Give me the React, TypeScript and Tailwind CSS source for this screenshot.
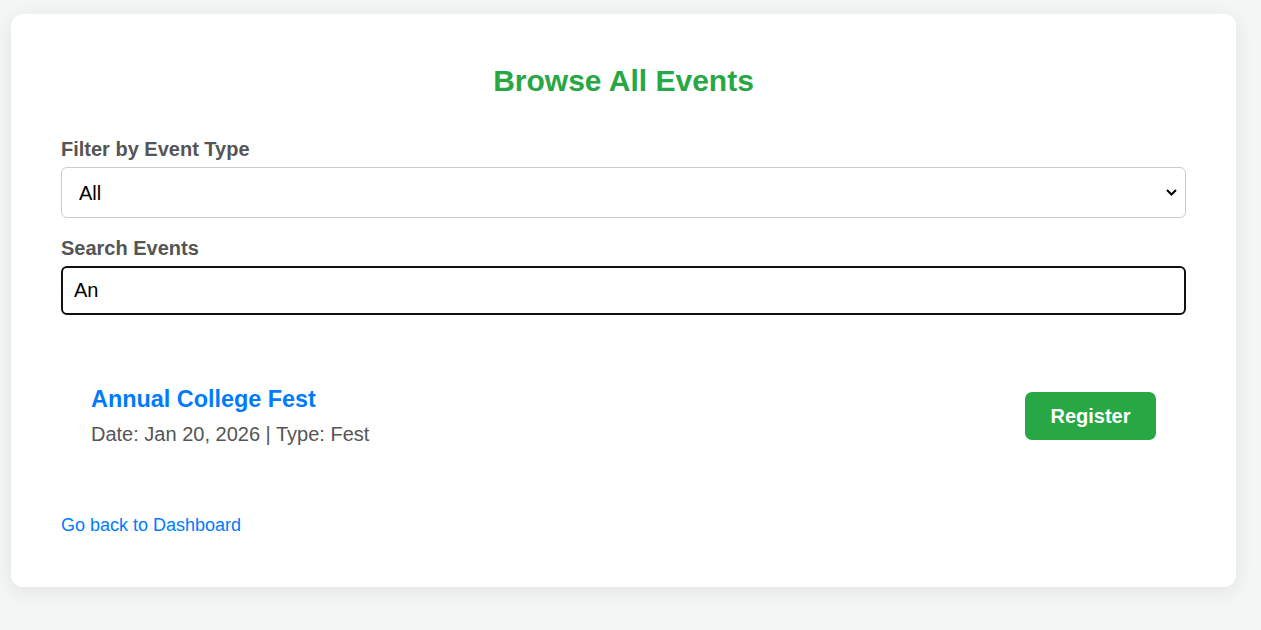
import { useState } from 'react';

const events = [{ name: 'Annual College Fest', date: 'Jan 20, 2026', type: 'Fest' }];

export default function App() {
    const [type, setType] = useState('All');
    const [query, setQuery] = useState('An');

    const shown = events.filter(
        (e) =>
            (type === 'All' || e.type === type) &&
            e.name.toLowerCase().includes(query.toLowerCase())
    );

    return (
        <div className="min-h-[630px] bg-[#f4f5f5] pt-[14px] pl-[11px] font-['Liberation_Sans',Arial,sans-serif]">
            <div className="w-[1225px] rounded-[12px] bg-white px-[50px] pt-[50px] pb-[51px] shadow-[0_4px_20px_rgba(0,0,0,0.08)]">
                <h2 className="text-center text-[30px] leading-[34px] font-bold text-[#28a745]">
                    Browse All Events
                </h2>

                <label className="mt-[40px] block text-[20px] leading-[23px] font-bold text-[#555]">
                    Filter by Event Type
                </label>
                <div className="relative mt-[6px]">
                    <select
                        value={type}
                        onChange={(e) => setType(e.target.value)}
                        className="block h-[51px] w-full appearance-none rounded-[6px] border border-[#ccc] bg-white pl-[17px] text-[20px] text-black outline-none"
                    >
                        <option>All</option>
                        <option>Fest</option>
                        <option>Workshop</option>
                        <option>Seminar</option>
                    </select>
                    <svg
                        className="pointer-events-none absolute top-[22px] right-[9px]"
                        width="11"
                        height="7"
                        viewBox="0 0 11 7"
                    >
                        <path d="M1 1l4.5 4.5L10 1" fill="none" stroke="#000" strokeWidth="2" />
                    </svg>
                </div>

                <label className="mt-[19px] block text-[20px] leading-[23px] font-bold text-[#555]">
                    Search Events
                </label>
                <input
                    value={query}
                    onChange={(e) => setQuery(e.target.value)}
                    className="mt-[6px] block h-[49px] w-full rounded-[6px] border-2 border-[#111] px-[11px] text-[20px] text-black outline-none"
                />

                <div className="mt-[41px]">
                    {shown.map((e) => (
                        <div key={e.name} className="flex items-center justify-between p-[30px]">
                            <div>
                                <h3 className="text-[23.4px] leading-[27px] font-bold text-[#007bff]">{e.name}</h3>
                                <p className="mt-[10px] text-[20px] leading-[23px] text-[#555]">
                                    Date: {e.date} | Type: {e.type}
                                </p>
                            </div>
                            <button className="h-[48px] w-[131px] rounded-[7px] bg-[#28a745] text-[20px] font-bold text-white">
                                Register
                            </button>
                        </div>
                    ))}
                </div>

                <a href="#" className="mt-[39px] block text-[18px] leading-[21px] text-[#007bff]">
                    Go back to Dashboard
                </a>
            </div>
        </div>
    );
}
